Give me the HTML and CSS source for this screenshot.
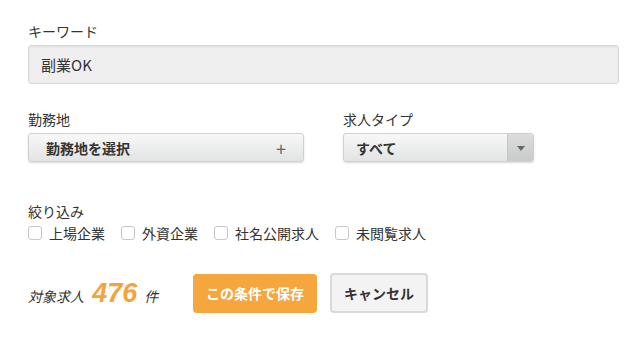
FILE: index.html
```html
<!DOCTYPE html>
<html lang="ja">
<head>
  <meta charset="UTF-8" />
  <title>検索条件</title>
  <link rel="stylesheet" href="styles.css">
</head>
<body>

  <div class="form">
    <div class="field">
      <div class="label">キーワード</div>
      <div class="keyword">副業OK</div>
    </div>

    <div class="row">
      <div class="field">
        <div class="label">勤務地</div>
        <div class="area-btn">
          <span>勤務地を選択</span>
          <span class="plus">+</span>
        </div>
      </div>
      <div class="field type-field">
        <div class="label">求人タイプ</div>
        <div class="type-select">
          <span class="value">すべて</span>
          <span class="arrow"></span>
        </div>
      </div>
    </div>

    <div class="field narrow">
      <div class="label">絞り込み</div>
      <div class="checks">
        <label class="check"><span class="box"></span>上場企業</label>
        <label class="check"><span class="box"></span>外資企業</label>
        <label class="check"><span class="box"></span>社名公開求人</label>
        <label class="check"><span class="box"></span>未閲覧求人</label>
      </div>
    </div>

    <div class="footer">
      <div class="count">対象求人 <b>476</b> 件</div>
      <button class="save">この条件で保存</button>
      <button class="cancel">キャンセル</button>
    </div>
  </div>

</body>
</html>
```

FILE: styles.css
```css
* {
  box-sizing: border-box;
}

body {
  margin: 0;
  background: #fff;
  font-family: "Noto Sans CJK JP", "Noto Sans", sans-serif;
  color: #333;
  font-size: 14px;
}

.form {
  padding: 21px 19px 0 28px;
}

.label {
  line-height: 20px;
  margin-bottom: 4px;
}

.keyword {
  height: 39px;
  line-height: 37px;
  padding-left: 12px;
  font-size: 15px;
  background: #efefef;
  border: 1px solid #d8d8d8;
  border-radius: 3px;
  box-shadow: inset 0 1px 2px rgba(0,0,0,0.08);
}

.row {
  display: flex;
  margin-top: 25px;
}

.type-field {
  margin-left: 39px;
}

.area-btn,
.type-select {
  height: 29px;
  display: flex;
  align-items: center;
  font-weight: bold;
  background: linear-gradient(#f8f8f8, #e2e3e3);
  border: 1px solid #d0d0d0;
  border-radius: 3px;
  box-shadow: 0 1px 2px rgba(0,0,0,0.15);
}

.area-btn {
  width: 276px;
  padding: 0 17px 0 17px;
  justify-content: space-between;
}

.plus {
  font-weight: normal;
  font-size: 18px;
  color: #666;
}

.type-select {
  width: 191px;
}

.type-select .value {
  flex: 1;
  padding-left: 12px;
}

.arrow {
  width: 26px;
  height: 100%;
  border-left: 1px solid #c4c4c4;
  background: linear-gradient(#dcdcdc, #c9caca);
  border-radius: 0 3px 3px 0;
  position: relative;
}

.arrow::after {
  content: "";
  position: absolute;
  left: 9px;
  top: 12px;
  border-left: 4px solid transparent;
  border-right: 4px solid transparent;
  border-top: 5px solid #666;
}

.narrow {
  margin-top: 39px;
}

.narrow .label {
  margin-bottom: 2px;
}

.checks {
  display: flex;
  gap: 16px;
}

.check {
  display: flex;
  align-items: center;
  line-height: 20px;
}

.box {
  width: 14px;
  height: 14px;
  border: 1px solid #c8c8c8;
  border-radius: 3px;
  background: #fff;
  margin-right: 7px;
}

.footer {
  display: flex;
  align-items: center;
  margin-top: 30px;
}

.count {
  font-style: italic;
  width: 165px;
}

.count b {
  color: #f5a33b;
  font-family: "Liberation Sans", sans-serif;
  font-size: 27px;
  margin: 0 4px 0 5px;
}

button {
  font-family: inherit;
  font-size: 14px;
  font-weight: bold;
  height: 39px;
  border-radius: 4px;
  cursor: pointer;
}

.save {
  width: 124px;
  background: #f5a63c;
  color: #fff;
  border: none;
}

.cancel {
  width: 98px;
  margin-left: 13px;
  background: #f3f3f3;
  color: #333;
  border: 2px solid #d9d9d9;
  height: 40px;
}
```
